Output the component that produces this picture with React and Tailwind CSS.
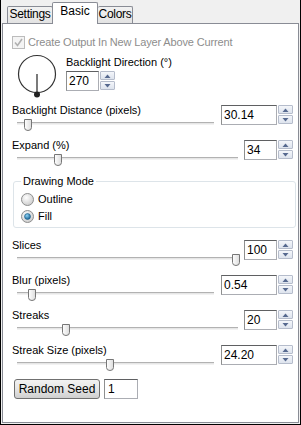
import React from 'react'

const font = { fontFamily: '"Liberation Sans", Arial, sans-serif' }

function Spinner() {
  return (
    <div className="flex flex-col gap-px w-[15px] h-[19px]">
      <div className="flex-1 flex items-center justify-center border border-[#b5bccb] bg-gradient-to-b from-[#f4f6fa] to-[#dde3ed] rounded-[1px]">
        <svg width="7" height="4" viewBox="0 0 7 4"><path d="M0.5 4 L3.5 0.5 L6.5 4 Z" fill="#56698f" /></svg>
      </div>
      <div className="flex-1 flex items-center justify-center border border-[#b5bccb] bg-gradient-to-b from-[#f4f6fa] to-[#dde3ed] rounded-[1px]">
        <svg width="7" height="4" viewBox="0 0 7 4"><path d="M0.5 0 L3.5 3.5 L6.5 0 Z" fill="#56698f" /></svg>
      </div>
    </div>
  )
}

function NumBox({ value, wide }) {
  return (
    <div className="flex gap-px items-start">
      <div className={`${wide ? 'w-[56px]' : 'w-[33px]'} h-[20px] border border-[#abadb3] border-t-[#5f6062] border-l-[#8e8f8f] bg-white flex items-center pl-[2px] text-[12px] text-black`}>
        {value}
      </div>
      <Spinner />
    </div>
  )
}

function Thumb() {
  return (
    <svg width="8" height="12" viewBox="0 0 8 12">
      <defs>
        <linearGradient id="tg" x1="0" x2="1" y1="0" y2="0">
          <stop offset="0" stopColor="#ffffff" />
          <stop offset="1" stopColor="#dcdcdc" />
        </linearGradient>
      </defs>
      <path d="M0.5 0.5 H7.5 V8.5 Q7.5 11.5 4 11.5 Q0.5 11.5 0.5 8.5 Z" fill="url(#tg)" stroke="#767676" />
    </svg>
  )
}

function SliderRow({ label, value, wide, thumb }) {
  return (
    <div className="flex h-[35px] justify-between">
      <div className="flex flex-col">
        <div className="h-[13px] leading-[13px] text-[11px] text-black whitespace-nowrap">{label}</div>
        <div className={`relative ml-[5px] h-[16px] ${wide ? 'w-[197px]' : 'w-[221px]'}`}>
          <div className="absolute left-0 right-0 top-[5px] h-[3px] border-t border-[#b2b2b2] border-b border-b-[#f2f2f2] bg-[#e6e6e6]" />
          <div className={`absolute top-[2px] ${thumb}`}><Thumb /></div>
        </div>
      </div>
      <div className="pt-[1px]">
        <NumBox value={value} wide={wide} />
      </div>
    </div>
  )
}

function Radio({ checked, label }) {
  return (
    <div className="flex items-center h-[13px] gap-[4px]">
      <svg width="13" height="13" viewBox="0 0 13 13">
        <defs>
          <radialGradient id="rg" cx="0.4" cy="0.35" r="0.7">
            <stop offset="0" stopColor="#ffffff" />
            <stop offset="1" stopColor="#c9c9c9" />
          </radialGradient>
          <radialGradient id="rb" cx="0.4" cy="0.35" r="0.7">
            <stop offset="0" stopColor="#8fd3f5" />
            <stop offset="1" stopColor="#0f5a8c" />
          </radialGradient>
        </defs>
        <circle cx="6.5" cy="6.5" r="6" fill="url(#rg)" stroke="#8e8f8f" />
        {checked && <circle cx="6.5" cy="6.5" r="3" fill="url(#rb)" stroke="#1d5f8a" strokeWidth="0.6" />}
      </svg>
      <span className="text-[11px] leading-[13px] text-black">{label}</span>
    </div>
  )
}

export default function App() {
  return (
    <div style={font} className="w-[301px] h-[425px] bg-[#f0f0f0] border-l border-r border-b border-black flex flex-col select-none">
      {/* tabs */}
      <div className="h-[23px] flex items-end pl-[6px] relative z-10">
        <div className="h-[17px] w-[46px] flex justify-center border border-b-0 border-[#898c95] bg-gradient-to-b from-[#f2f2f2] to-[#e3e3e3] text-[12px] leading-[15px] tracking-[-0.3px] text-black rounded-t-[2px]">
          Settings
        </div>
        <div className="h-[22px] w-[46px] mb-[-1px] flex justify-center border border-b-0 border-[#898c95] bg-white text-[12px] leading-[17px] text-black rounded-t-[2px] -ml-px">
          Basic
        </div>
        <div className="h-[17px] w-[35px] flex justify-center border border-b-0 border-l-0 border-[#898c95] bg-gradient-to-b from-[#f2f2f2] to-[#e3e3e3] text-[12px] leading-[15px] tracking-[-0.3px] text-black rounded-t-[2px]">
          Colors
        </div>
      </div>

      {/* panel */}
      <div className="mx-px h-[400px] border border-[#898c95] bg-white pl-[9px] pr-[5px]">
        {/* checkbox */}
        <div className="mt-[12px] h-[13px] flex items-center gap-[3px]">
          <div className="w-[13px] h-[13px] border border-[#bcbcbc] bg-[#f4f4f4] flex items-center justify-center">
            <svg width="9" height="9" viewBox="0 0 9 9"><path d="M1 4.5 L3.5 7.5 L8 1" fill="none" stroke="#b0b0b0" strokeWidth="1.6" /></svg>
          </div>
          <span className="text-[11px] leading-[13px] tracking-[-0.15px] text-[#8d8d8d] whitespace-nowrap">Create Output In New Layer Above Current</span>
        </div>

        {/* dial */}
        <div className="h-[55px] flex">
          <div className="ml-[5px] mt-[4px]">
            <svg width="40" height="45" viewBox="0 0 40 45">
              <circle cx="20" cy="21" r="18.5" fill="none" stroke="#333333" strokeWidth="1.2" />
              <line x1="20" y1="21" x2="20" y2="41" stroke="#333333" strokeWidth="1.3" />
              <circle cx="20" cy="41.5" r="3" fill="#222222" />
            </svg>
          </div>
          <div className="ml-[9px] mt-[7px] flex flex-col">
            <div className="h-[13px] text-[11px] leading-[13px] text-black whitespace-nowrap">Backlight Direction (°)</div>
            <div className="mt-[2px]">
              <NumBox value="270" />
            </div>
          </div>
        </div>

        <SliderRow label="Backlight Distance (pixels)" value="30.14" wide thumb="left-[7px]" />
        <SliderRow label="Expand (%)" value="34" thumb="left-[37px]" />

        {/* group box */}
        <div className="relative mt-[7px] ml-[1px] mr-[-3px] h-[47px] border border-[#dde4e9] rounded-[3px]">
          <div className="absolute left-[7px] top-[-7px] px-[2px] bg-white text-[11px] leading-[13px] text-black">Drawing Mode</div>
          <div className="pt-[11px] pl-[7px] flex flex-col gap-[4px]">
            <Radio label="Outline" />
            <Radio label="Fill" checked />
          </div>
        </div>

        <div className="mt-[11px]">
          <SliderRow label="Slices" value="100" thumb="left-[215px]" />
          <SliderRow label="Blur (pixels)" value="0.54" wide thumb="left-[11px]" />
          <SliderRow label="Streaks" value="20" thumb="left-[45px]" />
          <SliderRow label="Streak Size (pixels)" value="24.20" wide thumb="left-[89px]" />
        </div>

        <div className="flex items-center gap-[4px] ml-[2px]">
          <div className="w-[86px] h-[20px] border border-[#707070] rounded-[3px] bg-gradient-to-b from-[#f2f2f2] via-[#e6e6e6] to-[#cfcfcf] flex items-center justify-center text-[12px] text-black">
            Random Seed
          </div>
          <div className="w-[34px] h-[20px] border border-[#abadb3] border-t-[#5f6062] border-l-[#8e8f8f] flex items-center pl-[3px] text-[12px] text-black">1</div>
        </div>
      </div>
    </div>
  )
}
